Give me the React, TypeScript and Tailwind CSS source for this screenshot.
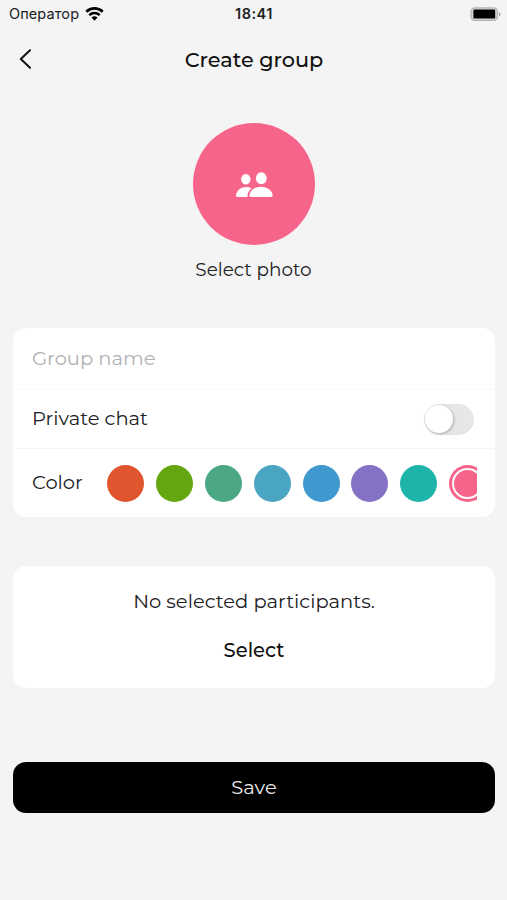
import { useState } from "react";
import clsx from "clsx";

const COLORS = [
  { name: "Orange", bg: "bg-[#e0552d]" },
  { name: "Green", bg: "bg-[#64a60f]" },
  { name: "Jade", bg: "bg-[#4ca884]" },
  { name: "Sky", bg: "bg-[#4aa5c2]" },
  { name: "Blue", bg: "bg-[#3f99ce]" },
  { name: "Violet", bg: "bg-[#8572c6]" },
  { name: "Teal", bg: "bg-[#1eb4a9]" },
  { name: "Pink", bg: "bg-[#f76489]" },
];

function WifiIcon() {
  return (
    <svg width="19" height="14" viewBox="0 0 19 14" fill="none">
      <path d="M1.3 4.7a11.8 11.8 0 0 1 16.4 0" stroke="#000" strokeWidth="2.7" />
      <path d="M4.3 8.1a7.5 7.5 0 0 1 10.4 0" stroke="#000" strokeWidth="2.5" />
      <path d="M9.5 13.7 6.5 10.6a4.3 4.3 0 0 1 6 0Z" fill="#000" />
    </svg>
  );
}

function BatteryIcon() {
  return (
    <svg width="32" height="14" viewBox="0 0 32 14">
      <rect x="1" y="0.9" width="26.4" height="12.6" rx="3.8" fill="#d6d6d6" stroke="#b4b4b4" strokeWidth="1.3" />
      <rect x="3.4" y="2.6" width="21.8" height="9" rx="1.2" fill="#000" />
      <path d="M28.9 5.2c1.1.3 1.8 1 1.8 2.1s-.7 1.8-1.8 2.1Z" fill="#a8a8a8" />
    </svg>
  );
}

function PeopleIcon() {
  return (
    <svg width="38" height="26" viewBox="0 0 38 26" fill="#fff">
      <ellipse cx="10.8" cy="8.2" rx="4.7" ry="5.2" />
      <path d="M2.2 25.900C1.300 25.900.9 25.400 1 24.600 1.500 19.800 5.400 16 10.900 16c2.200 0 4.200.5 5.700 1.400-2.500 1.800-4 4.300-4.100 7.200 0 .5 0 .9.1 1.300Z" />
      <ellipse cx="26.300" cy="7.300" rx="5.400" ry="6" />
      <path d="M16 25.900c-1.200 0-1.700-.6-1.600-1.600.6-4.900 5.400-8.600 11.600-8.600s11.100 3.700 11.700 8.600c.1 1-.4 1.600-1.600 1.600Z" />
    </svg>
  );
}

export default function App() {
  const [isPrivate, setIsPrivate] = useState(false);
  const [color, setColor] = useState("Pink");

  return (
    <div className="flex h-[900px] w-[507px] flex-col overflow-hidden bg-[#f4f4f4] font-[Montserrat,Inter,sans-serif] text-[19.5px] text-[#202022]">
      {/* Status bar */}
      <div className="grid h-[27px] shrink-0 grid-cols-3 items-center pl-[9px] pr-[5px] font-[Inter,sans-serif] text-[14.5px]">
        <div className="flex items-center gap-[6px]">
          <span className="tracking-[0.1px]">Оператор</span>
          <WifiIcon />
        </div>
        <span className="pr-[3px] text-center font-semibold tracking-[0.5px]">18:41</span>
        <div className="flex justify-end">
          <BatteryIcon />
        </div>
      </div>

      {/* Header */}
      <header className="grid h-[63px] shrink-0 grid-cols-[60px_1fr_60px] items-center pt-px">
        <button aria-label="Back" className="pl-[19px]">
          <svg width="13" height="20" viewBox="0 0 13 20" fill="none">
            <path d="M11 1.2 1.8 10 11 18.8" stroke="#111" strokeWidth="2" strokeLinecap="round" strokeLinejoin="round" />
          </svg>
        </button>
        <h1 className="pl-px pt-px text-center text-[20.8px] font-medium text-[#111]">Create group</h1>
      </header>

      {/* Photo */}
      <div className="mt-[33px] flex shrink-0 flex-col items-center">
        <button
          aria-label="Group photo"
          className="flex size-[122px] items-center justify-center rounded-full bg-[#f76489]"
        >
          <PeopleIcon />
        </button>
        <span className="mt-[11px] text-[18.4px] leading-7">Select photo</span>
      </div>

      {/* Group settings */}
      <section className="ml-[13px] mr-3 mt-[44px] flex h-[189px] shrink-0 flex-col rounded-[13px] bg-white">
        <div className="flex h-[62px] items-center border-b border-[#f8f8f8] px-[19px]">
          <input
            placeholder="Group name"
            className="w-full bg-transparent outline-none placeholder:text-[#b0b0b4]"
          />
        </div>
        <div className="flex h-[59px] items-center justify-between border-b border-[#f5f5f5] pl-[19px] pr-[21px]">
          <span>Private chat</span>
          <button
            role="switch"
            aria-label="Private chat"
            aria-checked={isPrivate}
            onClick={() => setIsPrivate(!isPrivate)}
            className={clsx(
              "flex h-[31px] w-[50px] items-center rounded-full border border-[#e2e2e2]",
              isPrivate ? "justify-end bg-[#64a60f]" : "bg-[#e7e7e7]"
            )}
          >
            <span className="size-7 rounded-full bg-white shadow-[1px_1px_3px_rgba(0,0,0,0.25)]" />
          </button>
        </div>
        <div className="flex flex-1 items-center pl-[19px] pr-[18.5px]">
          <span className="w-[75px] shrink-0">Color</span>
          <div className="flex min-w-0 flex-1 gap-[11.9px] overflow-hidden">
            {COLORS.map((c) => (
              <button
                key={c.name}
                aria-label={c.name}
                onClick={() => setColor(c.name)}
                className={clsx("size-[37px] shrink-0 rounded-full p-[3px]", c.bg)}
              >
                {color === c.name && (
                  <span className={clsx("block size-full rounded-full border-2 border-white", c.bg)} />
                )}
              </button>
            ))}
          </div>
        </div>
      </section>

      {/* Participants */}
      <section className="ml-[13px] mr-3 mt-[49px] flex h-[122px] shrink-0 flex-col items-center rounded-[13px] bg-white pt-[21px]">
        <p className="leading-7">No selected participants.</p>
        <button className="mt-[21px] font-medium leading-7 text-[#111]">Select</button>
      </section>

      <button className="ml-[13px] mr-3 mt-[74px] h-[51px] shrink-0 rounded-[13px] bg-black pt-px text-[#ececec]">
        Save
      </button>
    </div>
  );
}
